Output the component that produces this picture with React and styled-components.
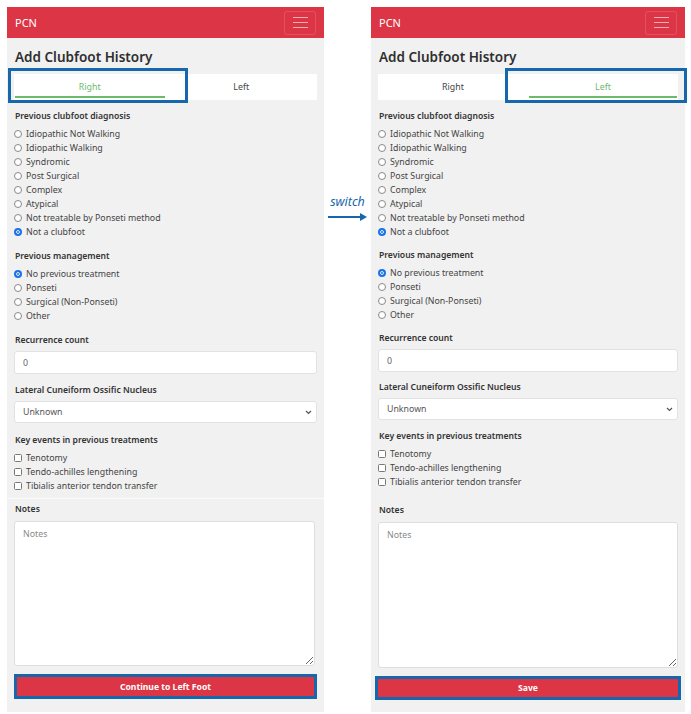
import React from "react";
import styled, { createGlobalStyle } from "styled-components";

const GlobalStyle = createGlobalStyle`
  * { box-sizing: border-box; }
  body {
    margin: 0;
    background: #ffffff;
    font-family: "Noto Sans", "Open Sans", sans-serif;
  }
`;

const Page = styled.div`
  display: flex;
  align-items: flex-start;
  padding: 7px 0 0 7px;
  width: 691px;
  height: 714px;
`;

const Phone = styled.div`
  width: ${(p) => p.w}px;
  height: 705px;
  background: #f1f1f1;
  display: flex;
  flex-direction: column;
`;

const Header = styled.div`
  height: 31px;
  background: #dc3545;
  display: flex;
  align-items: center;
  justify-content: space-between;
  padding: 0 8px 0 8px;
`;

const Brand = styled.span`
  color: #fff;
  font-size: 11px;
  font-family: "Noto Sans", sans-serif;
`;

const Burger = styled.button`
  width: 32px;
  height: 24px;
  border: 1px solid rgba(255, 255, 255, 0.14);
  border-radius: 3px;
  background: transparent;
  display: flex;
  flex-direction: column;
  justify-content: center;
  align-items: center;
  gap: 4px;
  padding: 0;
`;

const BurgerLine = styled.span`
  width: 15px;
  height: 1.3px;
  background: rgba(255, 255, 255, 0.6);
`;

const Body = styled.div`
  padding: 0 7px;
  display: flex;
  flex-direction: column;
`;

const Title = styled.h1`
  margin: 9px 0 0 1px;
  font-size: 13.5px;
  line-height: 20px;
  font-weight: 600;
  color: #2f2f2f;
`;

const Tabs = styled.div`
  margin-top: 7px;
  height: 26px;
  background: #fff;
  display: flex;
`;

const Tab = styled.div`
  position: relative;
  flex: 1;
  display: flex;
  align-items: center;
  justify-content: center;
  font-size: 8.8px;
  color: ${(p) => (p.active ? "#6cba6c" : "#444")};
  &::after {
    content: "";
    display: ${(p) => (p.active ? "block" : "none")};
    position: absolute;
    left: 1px;
    right: 1px;
    bottom: 2px;
    height: 2px;
    background: #6cba6c;
  }
`;

const Highlight = styled.div`
  position: absolute;
  top: -6px;
  bottom: -3px;
  left: ${(p) => p.l}px;
  right: ${(p) => p.r}px;
  border: 3px solid #1767ad;
  pointer-events: none;
`;

const Label = styled.div`
  margin-top: ${(p) => p.mt}px;
  padding-left: 1px;
  font-size: 8.6px;
  line-height: 14px;
  font-weight: 600;
  color: #333;
`;

const Options = styled.div`
  margin-top: 4px;
  display: flex;
  flex-direction: column;
`;

const Option = styled.div`
  display: flex;
  align-items: center;
  height: 14px;
  font-size: 8.8px;
  color: #444;
`;

const Radio = styled.span`
  width: 8px;
  height: 8px;
  border-radius: 50%;
  margin-right: 4px;
  border: ${(p) => (p.checked ? "2px solid #1a73e8" : "1px solid #8a8a8a")};
  box-shadow: ${(p) => (p.checked ? "inset 0 0 0 1px #fff" : "none")};
  background: ${(p) => (p.checked ? "#1a73e8" : "#fff")};
`;

const Check = styled.span`
  width: 8px;
  height: 8px;
  border-radius: 1.5px;
  margin-right: 4px;
  border: 1px solid #777;
  background: #fff;
`;

const TextInput = styled.input`
  display: block;
  margin-top: 4px;
  height: 23px;
  width: 100%;
  border: 1px solid #e2e2e2;
  border-radius: 3px;
  background: #fff;
  padding: 0 8px;
  font-size: 8.8px;
  color: #666;
  font-family: "Noto Sans", sans-serif;
  outline: none;
`;

const SelectWrap = styled.div`
  position: relative;
  margin-top: 4px;
`;

const Select = styled.select`
  display: block;
  appearance: none;
  height: 22px;
  width: 100%;
  border: 1px solid #e2e2e2;
  border-radius: 3px;
  background: #fff;
  padding: 0 8px;
  font-size: 8.8px;
  color: #555;
  font-family: "Noto Sans", sans-serif;
`;

const Chevron = styled.svg`
  position: absolute;
  right: 5px;
  top: 9px;
  pointer-events: none;
`;

const Separator = styled.div`
  margin: 5px -7px 0;
  height: 1px;
  background: #fafafa;
`;

const Notes = styled.textarea`
  display: block;
  margin-top: 5px;
  height: ${(p) => p.h}px;
  width: ${(p) => p.w}px;
  border: 1px solid #dedede;
  border-radius: 3px;
  background: #fff;
  padding: 6px 8px;
  font-size: 8.8px;
  font-family: "Noto Sans", sans-serif;
  resize: vertical;
  &::placeholder { color: #8a8a8a; }
`;

const ButtonWrap = styled.div`
  position: relative;
  margin: ${(p) => p.mt}px ${(p) => p.mx}px 0;
`;

const SubmitButton = styled.button`
  display: block;
  width: 100%;
  height: ${(p) => p.h}px;
  background: #dc3545;
  border: none;
  color: #fff;
  font-weight: 700;
  font-size: 8.6px;
  font-family: "Noto Sans", sans-serif;
`;

const ButtonHighlight = styled.div`
  position: absolute;
  top: -3px;
  bottom: ${(p) => p.b}px;
  left: ${(p) => p.x}px;
  right: ${(p) => p.x}px;
  border: 3px solid #1767ad;
  pointer-events: none;
`;

const Middle = styled.div`
  width: 47px;
  display: flex;
  flex-direction: column;
  align-items: center;
  padding-top: 186px;
  gap: 2px;
`;

const SwitchText = styled.span`
  font-style: italic;
  font-size: 12.5px;
  color: #1767ad;
  font-family: "Noto Sans", sans-serif;
`;

const diagnosis = [
  "Idiopathic Not Walking",
  "Idiopathic Walking",
  "Syndromic",
  "Post Surgical",
  "Complex",
  "Atypical",
  "Not treatable by Ponseti method",
  "Not a clubfoot",
];
const management = ["No previous treatment", "Ponseti", "Surgical (Non-Ponseti)", "Other"];
const events = ["Tenotomy", "Tendo-achilles lengthening", "Tibialis anterior tendon transfer"];

const FootForm = ({ side, w, gap, button, separator, notesMt, notesH, notesW, btnMt, btnH, btnMx, btnHl, hl }) => (
  <Phone w={w}>
    <Header>
      <Brand>PCN</Brand>
      <Burger>
        <BurgerLine />
        <BurgerLine />
        <BurgerLine />
      </Burger>
    </Header>
    <Body>
      <Title>Add Clubfoot History</Title>
      <Tabs>
        <Tab active={side === "right"}>
          Right
          {side === "right" && <Highlight l={hl[0]} r={hl[1]} />}
        </Tab>
        <Tab active={side === "left"}>
          Left
          {side === "left" && <Highlight l={hl[0]} r={hl[1]} />}
        </Tab>
      </Tabs>
      <Label mt={9}>Previous clubfoot diagnosis</Label>
      <Options>
        {diagnosis.map((d, i) => (
          <Option key={d}>
            <Radio checked={i === diagnosis.length - 1} />
            {d}
          </Option>
        ))}
      </Options>
      <Label mt={gap}>Previous management</Label>
      <Options>
        {management.map((d, i) => (
          <Option key={d}>
            <Radio checked={i === 0} />
            {d}
          </Option>
        ))}
      </Options>
      <Label mt={gap}>Recurrence count</Label>
      <TextInput defaultValue="0" />
      <Label mt={gap - 1}>Lateral Cuneiform Ossific Nucleus</Label>
      <SelectWrap>
        <Select defaultValue="unknown">
          <option value="unknown">Unknown</option>
        </Select>
        <Chevron width="7" height="5" viewBox="0 0 7 5">
          <path d="M1 1 L3.5 3.5 L6 1" stroke="#555" strokeWidth="1.2" fill="none" />
        </Chevron>
      </SelectWrap>
      <Label mt={gap}>Key events in previous treatments</Label>
      <Options>
        {events.map((d) => (
          <Option key={d}>
            <Check />
            {d}
          </Option>
        ))}
      </Options>
      {separator && <Separator />}
      <Label mt={notesMt}>Notes</Label>
      <Notes placeholder="Notes" h={notesH} w={notesW} />
      <ButtonWrap mt={btnMt} mx={btnMx}>
        <SubmitButton h={btnH}>{button}</SubmitButton>
        <ButtonHighlight x={btnHl} b={btnHl} />
      </ButtonWrap>
    </Body>
  </Phone>
);

const App = () => (
  <>
    <GlobalStyle />
    <Page>
      <FootForm
        side="right"
        w={317}
        gap={10}
        button="Continue to Left Foot"
        separator
        notesMt={3}
        notesH={145}
        notesW={301}
        btnMt={11}
        btnH={20}
        btnMx={2}
        btnHl={-2}
        hl={[-6, -22]}
      />
      <Middle>
        <SwitchText>switch</SwitchText>
        <svg width="40" height="10" viewBox="0 0 40 10">
          <line x1="0" y1="5" x2="33" y2="5" stroke="#1767ad" strokeWidth="2" />
          <path d="M32 1 L39 5 L32 9 Z" fill="#1767ad" />
        </svg>
      </Middle>
      <FootForm
        side="left"
        w={314}
        gap={9}
        button="Save"
        notesMt={14}
        notesH={146}
        notesW={300}
        btnMt={11}
        btnH={18}
        btnMx={0}
        btnHl={-3}
        hl={[-23, -9]}
      />
    </Page>
  </>
);

export default App;
